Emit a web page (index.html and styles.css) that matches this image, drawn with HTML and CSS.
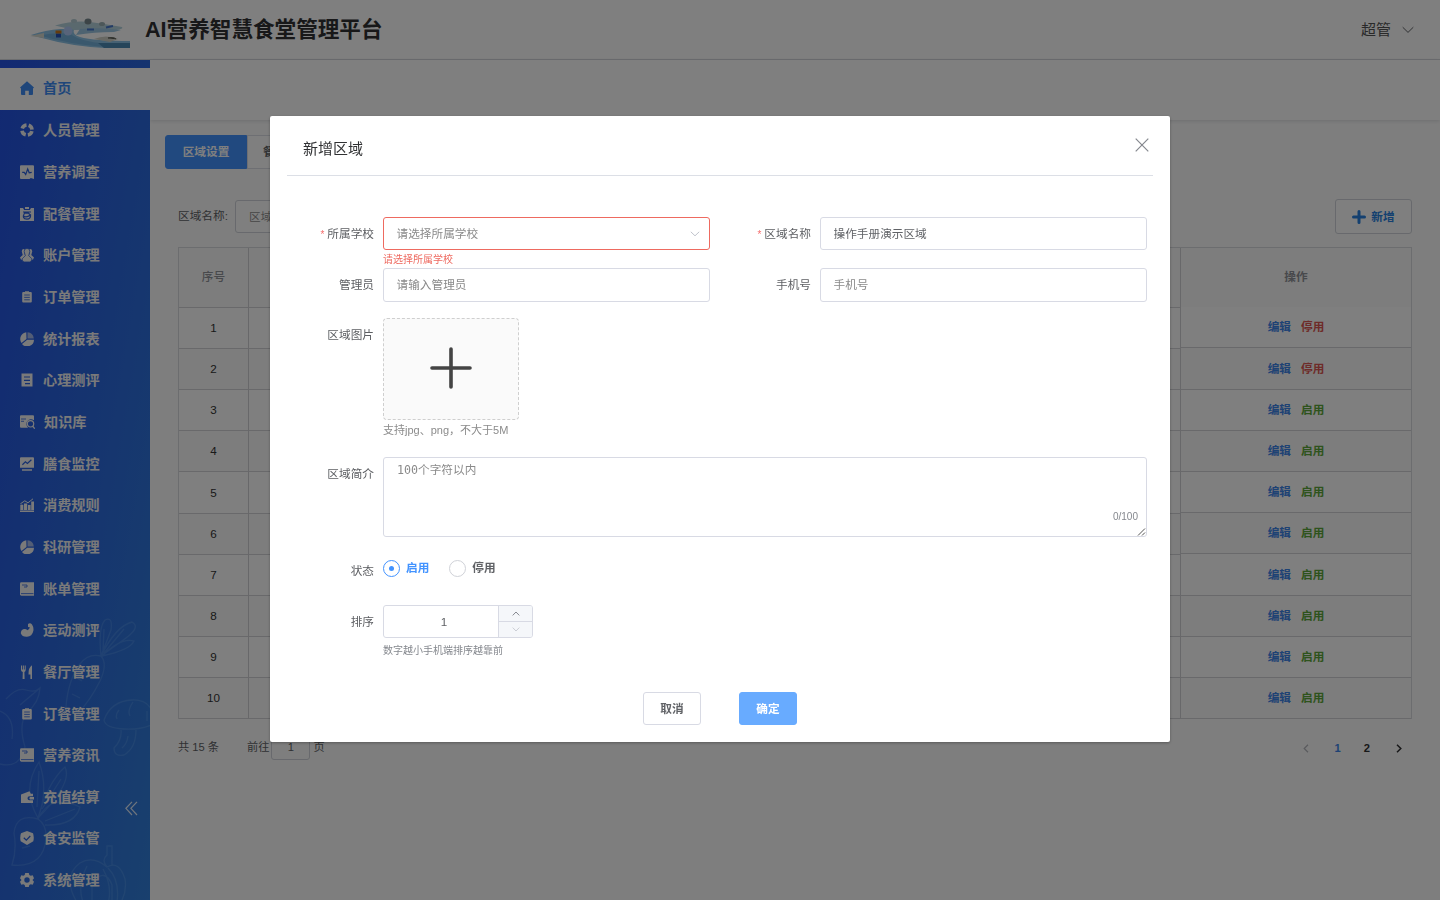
FILE: index.html
```html
<!DOCTYPE html>
<html lang="zh-CN">
<head>
<meta charset="utf-8">
<title>AI营养智慧食堂管理平台</title>
<link rel="stylesheet" href="styles.css">
</head>
<body>
<div class="app">
  <header class="topbar">
    <svg class="logo" width="100" height="32" viewBox="0 0 100 32">
      <defs><filter id="soft" x="0" y="0" width="1" height="1"><feGaussianBlur stdDeviation=".6"/></filter></defs>
      <g filter="url(#soft)">
        <path d="M1 19Q16 14 30 13L44 13Q42 19 50 21Q64 25 101 25V32H74Q40 30 12 22Z" fill="#8dc3e6"/>
        <path d="M10 19.500Q26 16 40 18Q52 26 74 27.500V31Q38 28 10 19.500Z" fill="#74b0da"/>
        <path d="M25 9.500Q44 4 60 6T92 11Q94 13 86 14Q70 13 44 14Z" fill="#b4d2dd"/>
        <path d="M50 13Q72 11 91 14L84 16Q64 16 46 19Z" fill="#9cc6e2"/>
        <path d="M64 23Q76 18 88 23L80 26Z" fill="#d0d1c6"/>
        <path d="M68 27H101V32H74Z" fill="#4d8ab4"/>
        <path d="M0 20L14 17V22Z" fill="#d5d8cf"/>
        <ellipse cx="38" cy="15" rx="4.500" ry="4.500" fill="#b0c8f5"/>
        <ellipse cx="58" cy="5.500" rx="3.500" ry="3" fill="#78898e"/>
        <ellipse cx="44" cy="5" rx="3" ry="2" fill="#b4ccd4"/>
        <ellipse cx="72" cy="8" rx="3" ry="2" fill="#98aeb2"/>
        <path d="M57 13.500h7M76 11.500l7-1.500" stroke="#4777cc" stroke-width="2"/>
        <path d="M78 22q5-1 8 1" stroke="#696b62" stroke-width="1.400"/>
      </g>
      <path d="M26 17.500h5v4h-5z" fill="#2450b8"/><path d="M25.500 14.500h6v3h-6z" fill="#c8781c"/>
    </svg>
    <h1 class="brand">AI营养智慧食堂管理平台</h1>
    <div class="user"><span>超管</span><svg width="12" height="8" viewBox="0 0 12 8"><path d="M.7 1.2 6 6.4l5.300-5.200" fill="none" stroke="#606266"/></svg></div>
  </header>
  <div class="body">
    <aside class="sidebar">
      <svg class="veggies" width="150" height="301" viewBox="0 0 150 301" fill="none" stroke="#8fcaff" stroke-width="1.3">
        <path transform="translate(0 -4)" d="M101 61Q88 58 80 69Q68 85 66 112M101 61Q108 69 100 86Q90 106 78 118M101 61Q98 33 105 25Q113 21 111 35ZM101 61Q116 31 132 27Q141 32 126 43ZM102 61Q121 42 134 46Q130 55 102 61M104 34l-1 22M124 34l-20 24M80 72l8 3M75 82l7 4M91 81l6 2M72 99l8 4"/>
        <path d="M6 100Q17 88 26 91T40 89Q39 104 27 113Q18 125 25 148Q20 170 0 165M0 112Q15 118 12 140M40 89l-20 17"/>
        <path d="M104 121Q111 102 132 101T155 124Q143 131 124 130T104 121M121 131Q122 141 114 149Q114 158 124 156Q136 149 136 131M119 111q-4 5-2 9M133 103q-6 9-3 14M147 112v10M128 137q-1 8-6 12"/>
        <path d="M38 219Q21 190 39 163Q49 190 38 219Q48 183 65 168Q73 184 38 219ZM38 220Q50 194 80 208Q75 227 45 226M38 220Q16 214 14 234Q17 251 12 266Q43 269 46 240Q47 226 38 220M39 172l-2 36M61 180l-19 30M75 210l-30 12M20 236l10 2M22 249l8-2"/>
        <path transform="translate(0 21)" d="M82 290Q59 258 80 243Q93 235 107 247Q119 240 125 259Q128 276 114 292M107 247Q101 240 107 235V226H112V246M87 246Q74 272 88 291M103 249Q115 271 105 291M108 248Q120 260 117 282M92 291V263q13-16 20 2v26"/>
      </svg>
      <nav class="menu">
        <a class="item active"><svg class="ico" viewBox="0 0 14 14"><path d="M7 .2 14 6.4l-1 1.1V13a1 1 0 0 1-1 1H8.8V9.8H5.2V14H2a1 1 0 0 1-1-1V7.5L0 6.4z"/></svg>首页</a>
        <a class="item"><svg class="ico" viewBox="0 0 14 14"><circle cx="7" cy="7" r="5" fill="none" stroke="currentColor" stroke-width="3.6" stroke-dasharray="5.6 2.254" stroke-dashoffset="-1.127"/></svg>人员管理</a>
        <a class="item"><svg class="ico" viewBox="0 0 14 14"><path d="M1 .3h12q1 0 1 1V14l-3.2-1-1.3 1H1q-1 0-1-1V1.3q0-1 1-1z"/><path class="cut" d="M2.2 7.4h2l1.5 2 2-5.4 1.5 3.8 2.5-.4"/></svg>营养调查</a>
        <a class="item"><svg class="ico" viewBox="0 0 14 14"><path d="M0 1h3l1.2 2h5.6L11 1h3v13H0z"/><path d="M5 0h4v2H5z"/><path class="cut" d="M3 5h8M3.4 9q3 2 7-1l-2-2-4 .2q-3 5.6 2.6 6 4 0 3.5-5"/></svg>配餐管理</a>
        <a class="item"><svg class="ico" viewBox="0 0 14 14"><path d="M4.7 1Q1.6.5 1.8 3.5L2.7 7 0 9.5Q.4 12 3 12l3-3-1.5-3zM9.3 1q3.1-.5 2.9 2.5L11.3 7 14 9.5Q13.6 12 11 12L8 9l1.5-3z"/><path class="edge" d="M7 .4q3 0 2.8 3.2L8.7 7.7l3.2 3.1q0 3.1-2.4 3.1h-5q-2.4 0-2.4-3l3.2-3.2-1.1-4.1Q4 .4 7 .4z"/></svg>账户管理</a>
        <a class="item"><svg class="ico" viewBox="0 0 14 14"><path d="M3.200 2H5V1.200h4V2h1.800q1 0 1 1v8.500q0 1-1 1H3.200q-1 0-1-1V3q0-1 1-1z"/><path class="cut thin" d="M4.200 5h5.600M4.200 7.400h5.600M4.200 9.800h5.600"/></svg>订单管理</a>
        <a class="item"><svg class="ico" viewBox="0 0 14 14"><path d="M6.3.3A6.8 6.8 0 0 0 1.5 11l5-4zM2 12l5.2-4.3H14A6.8 6.8 0 0 1 2 12z"/><path d="M7.5.3Q13 .7 13.8 6.4H7.5z" opacity=".62"/></svg>统计报表</a>
        <a class="item"><svg class="ico" viewBox="0 0 14 14"><path d="M1.500.500h11v13h-11z"/><path class="cut" d="M4 4h6M4 7.3h6M5 10.7h5"/></svg>心理测评</a>
        <a class="item"><svg class="ico wide" viewBox="0 0 15 14"><path d="M1 .3h12q1 0 1 1v4Q10 3 7.5 6T8 12.8H1q-1 0-1-1V1.3q0-1 1-1z"/><path class="cut thin" d="M1 4h5M1 6.3h3"/><circle cx="10.500" cy="8.8" r="3.2" fill="none" stroke="currentColor" stroke-width="1.2"/><path d="m12.500 11 2.300 2.700" stroke="currentColor" stroke-width="1.3"/></svg>知识库</a>
        <a class="item"><svg class="ico" viewBox="0 0 14 14"><path d="M1 .3h12q1 0 1 1v9.5H0V1.3q0-1 1-1zM2 12.2h10v1.5H2z"/><path class="cut" d="m2.4 7.7 3-2.8 2 1.6 4-3.7"/></svg>膳食监控</a>
        <a class="item"><svg class="ico" viewBox="0 0 14 14"><path d="M.3 7q1.500-1 3 0v5h-3zM4 5.500h3.200V12H4zM8 7h2.600v5H8zM11.200 3.500H14V12h-2.800zM0 12.500h14V14H0z"/><path d="m.4 5.8 4.400-3 3.200 2 5-4" fill="none" stroke="currentColor"/></svg>消费规则</a>
        <a class="item"><svg class="ico" viewBox="0 0 14 14"><path d="M6.3.3A6.8 6.8 0 0 0 1.5 11l5-4zM2 12l5.2-4.3H14A6.8 6.8 0 0 1 2 12z"/><path d="M7.5.3Q13 .7 13.8 6.4H7.5z" opacity=".62"/></svg>科研管理</a>
        <a class="item"><svg class="ico" viewBox="0 0 14 14"><path d="M1.4.3H14v13.4H1.4Q0 13.7 0 12.3V1.7Q0 .3 1.4.3z"/><path class="cut thin" d="M2 3h5M4 5h3v-2M1 11.6h12.5"/></svg>账单管理</a>
        <a class="item"><svg class="ico" viewBox="0 0 14 14"><path d="M8 1Q10.300-.5 12 1.500 14 4.500 13.300 8 12.200 13.600 7 13.800 2 14 .8 10.300.6 7.500 3 6.300 5.700 5.300 7.400 7.300 9.300 7 9.800 4.300L8 4z"/></svg>运动测评</a>
        <a class="item"><svg class="ico" viewBox="0 0 14 14"><path d="M1 .5h1v4h.8v-4h1.100v4h.8v-4h1V5q0 1.600-1.300 2l.2 7H2.600l.2-7Q1 6.600 1 5zM12 .3V14h-1.600V9.500H8.500Q8.300 2.500 12 .3z"/></svg>餐厅管理</a>
        <a class="item"><svg class="ico" viewBox="0 0 14 14"><path d="M3.200 2H5V1.200h4V2h1.800q1 0 1 1v8.500q0 1-1 1H3.200q-1 0-1-1V3q0-1 1-1z"/><path class="cut thin" d="M4.200 5h5.600M4.200 7.400h5.600M4.200 9.800h5.600"/></svg>订餐管理</a>
        <a class="item"><svg class="ico" viewBox="0 0 14 14"><path d="M1.400.300H14v13.400H1.400Q0 13.700 0 12.300V1.700Q0 .300 1.400.300z"/><path class="cut thin" d="M2 3h5M4 5h3v-2M1 11.600h12.500"/></svg>营养资讯</a>
        <a class="item"><svg class="ico" viewBox="0 0 14 14"><path d="M1 4.500 9.500 1.200l1.300 2.500h2.200v2.500H9.500q-2 0-2 2t2 2H13V13H1z"/><path d="M10 7h4v2.600h-4q-1.500-1.300 0-2.600z"/></svg>充值结算</a>
        <a class="item"><svg class="ico" viewBox="0 0 14 14"><path d="M7 0 13 2.300q1.400 4 .3 8L7 14 .7 10.300q-1.100-4 .3-8z"/><path class="cut" d="m3.800 6.700 2.500 2.400 4-4.100"/></svg>食安监管</a>
        <a class="item"><svg class="ico" viewBox="0 0 14 14"><path fill-rule="evenodd" d="M5.200 0h3.600l.5 2 1.400.8 2-.6 1.300 3L12.500 7l1.500 1.800-1.300 3-2-.6-1.400.8-.5 2H5.200l-.5-2-1.400-.8-2 .6-1.300-3L1.500 7 0 5.200l1.300-3 2 .6L4.700 2zM7 4.300a2.700 2.700 0 1 0 0 5.400 2.700 2.700 0 0 0 0-5.400z"/></svg>系统管理</a>
      </nav>
      <svg class="collapse" width="13" height="15" viewBox="0 0 13 15" fill="none" stroke="#fff" stroke-opacity=".85" stroke-width="1.200"><path d="M7 .8.9 7.300 7 14M12 .8 5.900 7.300 12 14"/></svg>
    </aside>
    <main class="main">
      <div class="tagsbar"></div>
      <section class="content">
        <div class="tabs"><span class="tab on">区域设置</span><span class="tab next">餐厅</span></div>
        <div class="search">
          <label class="search-label">区域名称:</label>
          <span class="search-input">区域名称</span>
          <button class="add"><svg width="14" height="14" viewBox="0 0 14 14"><path d="M7 1.500v11M1.500 7h11" stroke="currentColor" stroke-width="3" stroke-linecap="round"/></svg>新增</button>
        </div>
        <div class="table">
          <div class="col no"><div class="th">序号</div><div>1</div><div>2</div><div>3</div><div>4</div><div>5</div><div>6</div><div>7</div><div>8</div><div>9</div><div>10</div></div>
          <div class="col info"><div class="th"></div><div></div><div></div><div></div><div></div><div></div><div></div><div></div><div></div><div></div><div></div></div>
          <div class="col ops"><div class="th">操作</div><div><a>编辑</a><a class="off">停用</a></div><div><a>编辑</a><a class="off">停用</a></div><div><a>编辑</a><a class="start">启用</a></div><div><a>编辑</a><a class="start">启用</a></div><div><a>编辑</a><a class="start">启用</a></div><div><a>编辑</a><a class="start">启用</a></div><div><a>编辑</a><a class="start">启用</a></div><div><a>编辑</a><a class="start">启用</a></div><div><a>编辑</a><a class="start">启用</a></div><div><a>编辑</a><a class="start">启用</a></div></div>
        </div>
        <div class="pager">
          <span class="total">共 15 条</span><span>前往</span><span class="jump">1</span><span>页</span>
          <div class="pages"><svg width="6" height="9" viewBox="0 0 6 9"><path d="M5 .8 1.200 4.500 5 8.200" fill="none" stroke="#b4b6bc" stroke-width="1.200"/></svg><b class="cur">1</b><b>2</b><svg width="6" height="9" viewBox="0 0 6 9"><path d="m1 .8 3.800 3.700L1 8.200" fill="none" stroke="#303133" stroke-width="1.500"/></svg></div>
        </div>
      </section>
    </main>
  </div>
</div>

<div class="mask">
  <div class="dialog">
    <div class="dialog-head"><span>新增区域</span><svg width="14" height="14" viewBox="0 0 14 14"><path d="m.7.700 12.600 12.600M13.300.700.700 13.300" stroke="#85888e" stroke-width="1.200"/></svg></div>
    <div class="form">
      <div class="row r1">
        <label class="label"><i>*</i>所属学校</label>
        <div class="field"><div class="input error"><span>请选择所属学校</span><svg width="10" height="6" viewBox="0 0 10 6"><path d="m.8.800 4.200 4L9.200.800" fill="none" stroke="#c0c4cc"/></svg></div><p class="message">请选择所属学校</p></div>
        <label class="label second"><i>*</i>区域名称</label>
        <div class="field"><div class="input filled">操作手册演示区域</div></div>
      </div>
      <div class="row r2">
        <label class="label">管理员</label><div class="field"><div class="input">请输入管理员</div></div>
        <label class="label second">手机号</label><div class="field"><div class="input">手机号</div></div>
      </div>
      <div class="row r3">
        <label class="label">区域图片</label>
        <div class="field"><div class="upload"><svg width="42" height="42" viewBox="0 0 42 42"><path d="M21 2v38M2 21h38" stroke="#444" stroke-width="3.600" stroke-linecap="round"/></svg></div><p class="hint">支持jpg、png，不大于5M</p></div>
      </div>
      <div class="row r4">
        <label class="label">区域简介</label>
        <div class="textarea"><span>100个字符以内</span><em>0/100</em><svg class="grip" width="9" height="9" viewBox="0 0 9 9"><path d="M1 8.500 8 1.500M5 8.500 8 5.500" stroke="#555"/></svg></div>
      </div>
      <div class="row r5">
        <label class="label">状态</label>
        <div class="radios"><span class="radio checked"><i></i>启用</span><span class="radio"><i></i>停用</span></div>
      </div>
      <div class="row r6">
        <label class="label">排序</label>
        <div class="field"><div class="number"><span class="value">1</span><span class="steps"><b><svg width="8" height="5" viewBox="0 0 8 5"><path d="m.7 4.400 3.300-3.400 3.300 3.400" fill="none" stroke="#7b7e84" stroke-width=".9"/></svg></b><b><svg width="8" height="5" viewBox="0 0 8 5"><path d="m.7.600 3.300 3.400L7.300.600" fill="none" stroke="#c6c9d0" stroke-width=".9"/></svg></b></span></div><p class="hint note">数字越小手机端排序越靠前</p></div>
      </div>
    </div>
    <div class="actions"><button class="btn">取消</button><button class="btn primary">确定</button></div>
  </div>
</div>
</body>
</html>
```
FILE: styles.css
```css
* { box-sizing: border-box; }
body { margin: 0; height: 900px; overflow: hidden; color: #606266; font: 11.67px/16px "Liberation Sans", "Noto Sans CJK SC", sans-serif; }
p, h1 { margin: 0; }
i, em { font-style: normal; }
svg { display: block; flex: none; }
.app { height: 900px; background: #fdfdfd; overflow: hidden; }

/* top bar */
.topbar { height: 60px; display: flex; align-items: center; padding: 0 26px 0 30px; background: #fff; border-bottom: 1px solid #d8dade; }
.logo { margin-top: 4px; }
.brand { margin-left: 15px; font-size: 21.6px; line-height: 32px; font-weight: 700; color: #303133; }
.user { margin-left: auto; display: flex; align-items: center; gap: 11px; font-size: 15px; color: #555; }

.body { display: flex; height: 840px; }

/* sidebar */
.sidebar { position: relative; flex: none; width: 150px; height: 840px; padding-top: 8px; overflow: hidden; background: linear-gradient(100deg, #2452e4 0%, #2c6cde 60%, #3280dc 100%); }
.veggies { position: absolute; left: 0; bottom: 0; opacity: .2; }
.menu { position: relative; }
.item { display: flex; align-items: center; gap: 9px; height: 41.67px; padding: 0 0 1px 20px; font-size: 14.17px; font-weight: 700; color: #f4f4f4; }
.item.active { height: 42px; padding-bottom: 2px; background: #fff; color: #3e8df5; }
.ico { width: 14px; height: 14px; fill: currentColor; }
.ico.wide { width: 15px; }
.cut { fill: none; stroke: #2a61df; stroke-width: 1.2; }
.thin { stroke-width: .8; }
.edge { stroke: #2a61df; stroke-width: .7; }
.collapse { position: absolute; left: 125px; top: 741px; }

/* page */
.main { flex: 1; min-width: 0; }
.tagsbar { height: 60px; background: #fff; box-shadow: 0 1px 4px rgba(0, 21, 41, .14); }
.content { height: 650px; padding: 15px 28px 0; }
.tabs { display: flex; height: 34px; margin-left: -13px; }
.tab { width: 82px; line-height: 31px; text-align: center; font-weight: 700; border: 1px solid #dcdfe6; background: #fff; }
.tab.on { background: #4293ff; border-color: #4293ff; color: #fff; border-radius: 3px 0 0 3px; }
.tab.next { padding-left: 15px; text-align: left; }
.search { display: flex; align-items: center; height: 35px; margin-top: 30px; }
.search-label { width: 57px; padding-bottom: 1px; }
.search-input { width: 180px; height: 33px; padding: 0 13px; line-height: 32px; border: 1px solid #d0d3da; border-radius: 3px; background: #fff; color: #909090; }
.add { display: flex; align-items: center; justify-content: center; gap: 5px; width: 77px; height: 35px; margin-left: auto; border: 1px solid #d0d3da; border-radius: 3px; background: #fff; color: #2881e0; font: inherit; font-weight: 700; padding: 0; }
.table { display: grid; grid-template-columns: 70px 1fr 230px; height: 472px; margin-top: 13px; border: 1px solid #d8dade; border-bottom: 0; background: #fff; }
.col { display: grid; grid-template-rows: 60px repeat(4, 41px) 42px repeat(5, 41px); border-right: 1px solid #d0d1d4; }
.col.ops { grid-template-rows: 59px 41px 42px repeat(4, 41px) 42px repeat(3, 41px); border-right: 0; }
.col > div { display: flex; align-items: center; justify-content: center; gap: 10px; border-bottom: 1px solid #d2d3d6; color: #333; }
.col > div:nth-child(odd) { background: #fafafa; }
.col > .th { padding-bottom: 1px; background: #f5f5f6; color: #909399; font-weight: 500; }
.ops > .th { border-bottom: 0; font-weight: 700; }
.ops a { color: #3d84e8; font-weight: 700; }
.ops a.off { color: #dc5652; }
.ops a.start { color: #5da73b; }
.pager { display: flex; align-items: flex-start; height: 41px; padding-top: 20px; font-size: 11.2px; }
.total { width: 69px; }
.jump { width: 39px; height: 30px; margin: -9px 3px 0 2px; padding-top: 5px; line-height: 22px; text-align: center; border: 1px solid #d0d3da; border-radius: 3px; }
.pages { display: flex; align-items: center; margin-left: auto; padding-right: 10px; height: 18px; color: #303133; }
.pages .cur { color: #3d84e8; margin: 0 23px 0 26px; }
.pages svg:last-child { margin-left: 26px; }

/* dialog */
.mask { position: fixed; inset: 0; background: rgba(0, 0, 0, .5); padding: 116px 270px 158px; }
.dialog { height: 626px; background: #fff; border-radius: 2px; box-shadow: 0 1px 3px rgba(0, 0, 0, .3); overflow: hidden; }
.dialog-head { display: flex; justify-content: space-between; height: 60px; margin: 0 17px; padding: 22px 4px 0 16px; border-bottom: 1px solid #dcdfe6; font-size: 15px; line-height: 22px; color: #303133; }
.form { padding: 41px 23px 0 0; }
.row { display: flex; align-items: flex-start; }
.r1 { height: 51px; }
.r2 { height: 50px; }
.r3 { height: 139px; }
.r4 { height: 102px; }
.r5 { height: 46px; }
.r6 { height: 87px; }
.label { flex: none; width: 104px; margin-right: 9px; line-height: 33px; text-align: right; color: #5c5e62; }
.label.second { width: 101px; }
.label i { margin-right: 3px; font-size: 10px; color: #f56c6c; }
.r3 .label, .r4 .label { line-height: 34px; }
.r5 .label { line-height: 24px; }
.field { width: 327px; }
.input { display: flex; align-items: center; justify-content: space-between; height: 33px; padding: 0 9px 0 12.5px; border: 1px solid #d8dae4; border-radius: 3px; color: #8a8a8a; }
.r2 .input { height: 34px; }
.input.error { border-color: #ee6a60; }
.input.filled { color: #606266; }
.message { padding-top: 2px; font-size: 10px; color: #ee6a60; }
.upload { display: grid; place-items: center; width: 136px; height: 102px; padding-bottom: 2px; border: 1px dashed #cfcfcf; border-radius: 4px; background: #fafafa; }
.hint { padding-top: 2px; font-size: 11px; color: #8b8b8b; }
.hint.note { padding-top: 5px; font-size: 10px; color: #85888e; }
.textarea { position: relative; width: 764px; height: 80px; padding: 4px 13px; border: 1px solid #d8dae4; border-radius: 3px; font-family: "DejaVu Sans Mono", "Noto Sans CJK SC", monospace; color: #8a8a8a; }
.textarea em { position: absolute; right: 8px; bottom: 11px; font: 10px/16px "Liberation Sans", sans-serif; color: #85888e; }
.grip { position: absolute; right: 0; bottom: 0; }
.radios { display: flex; gap: 20px; margin-top: -1px; }
.radio { display: flex; align-items: center; gap: 6px; height: 20px; font-weight: 700; color: #606266; }
.radio i { display: grid; place-items: center; width: 17px; height: 17px; border: 1px solid #d0d2d8; border-radius: 50%; margin-top: 1px; }
.radio.checked { color: #4293ff; }
.radio.checked i { border-color: #4293ff; }
.radio.checked i::after { content: ""; width: 5px; height: 5px; border-radius: 50%; background: #4293ff; }
.number { display: flex; width: 150px; height: 33px; border: 1px solid #d8dae4; border-radius: 3px; overflow: hidden; }
.value { width: 114px; padding-left: 6px; line-height: 32px; text-align: center; }
.steps { flex: 1; border-left: 1px solid #d8dae4; background: #f5f7fa; }
.steps b { display: grid; place-items: center; height: 15px; }
.steps b + b { height: 16px; border-top: 1px solid #d8dae4; }
.actions { display: flex; justify-content: center; gap: 38px; }
.btn { width: 58px; height: 33px; padding: 0; border: 1px solid #d8dae4; border-radius: 3px; background: #fff; color: #606266; font: inherit; font-weight: 700; }
.btn.primary { border-color: #68abff; background: #68abff; color: #fff; }
```
